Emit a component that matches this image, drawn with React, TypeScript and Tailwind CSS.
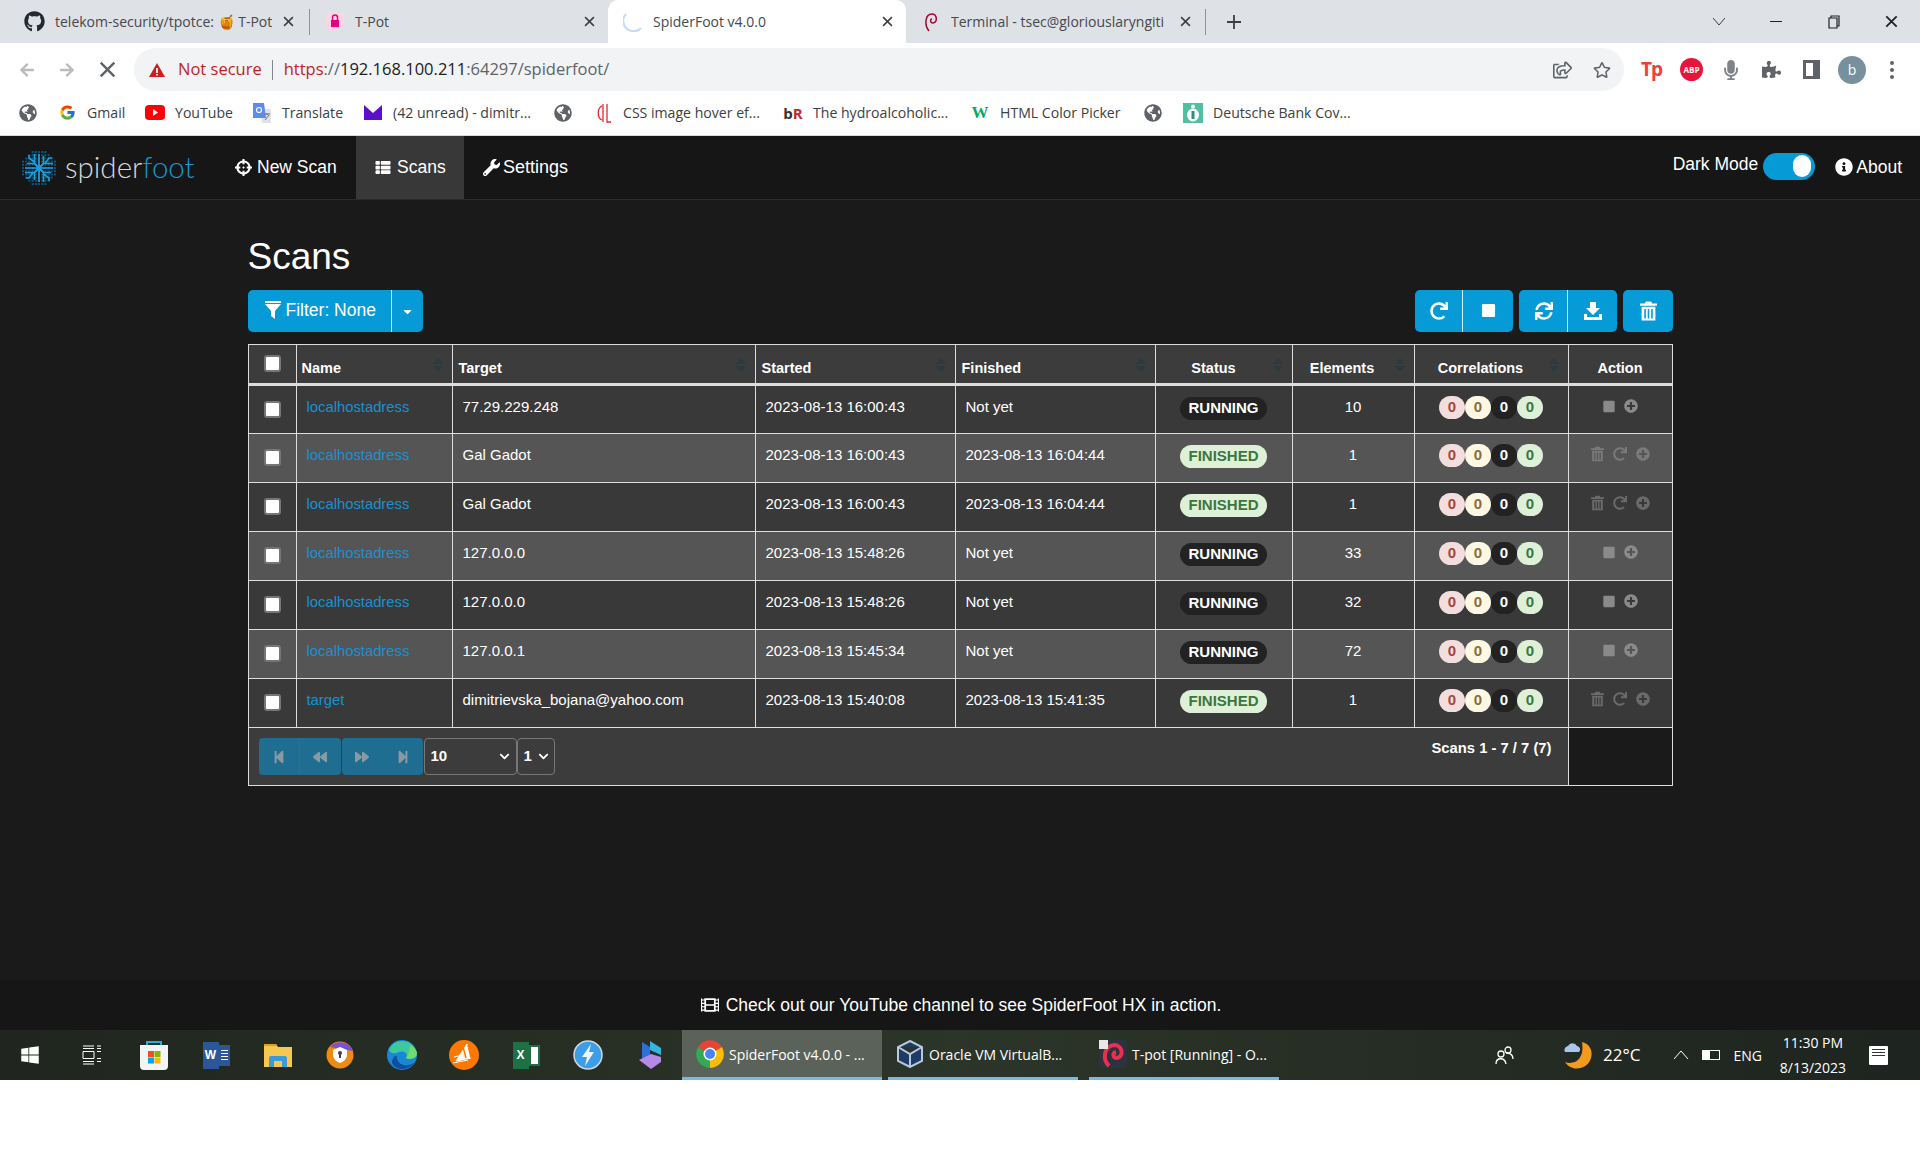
import React from "react";
import { FaGithub, FaWindows, FaWrench, FaInfoCircle, FaFilm, FaPlusCircle, FaStop, FaRedo, FaSync, FaStepBackward, FaStepForward, FaBackward, FaForward, FaCrosshairs, FaThList, FaPuzzlePiece, FaMicrophone, FaGlobeAmericas, FaChevronDown, FaArrowLeft, FaArrowRight, FaRegStar, FaRegShareSquare, FaCaretDown } from "react-icons/fa";
import { FcGoogle } from "react-icons/fc";

const CHROME = { fontFamily: '"Open Sans", "Noto Sans", sans-serif' };
const SANS = { fontFamily: '"Liberation Sans", Arial, sans-serif' };

function X({ className = "" }: { className?: string }) {
  return (
    <svg viewBox="0 0 10 10" className={`w-[11px] h-[11px] ${className}`} fill="none" stroke="currentColor" strokeWidth="1.4">
      <path d="M1 1l8 8M9 1l-8 8" />
    </svg>
  );
}

function Trash({ className = "" }: { className?: string }) {
  return (
    <svg viewBox="0 0 16 18" className={className} fill="currentColor">
      <path d="M5.500 0h5l1 2H16v2H0V2h4.500z" />
      <path fillRule="evenodd" d="M1.500 5h13v13h-13zM4 7v9h1.500V7zM7.250 7v9h1.500V7zM10.500 7v9H12V7z" />
    </svg>
  );
}

function Save({ className = "" }: { className?: string }) {
  return (
    <svg viewBox="0 0 18 18" className={className} fill="currentColor">
      <path d="M6 0h6v6h4l-7 7-7-7h4z" />
      <path d="M0 12h3v3h12v-3h3v6H0z" />
    </svg>
  );
}

function Funnel({ className = "" }: { className?: string }) {
  return (
    <svg viewBox="0 0 16 18" className={className} fill="currentColor">
      <path d="M0 0h16v2H0zM0 3h16l-6 7v8l-4-3v-5z" />
    </svg>
  );
}

function Sort() {
  return (
    <svg viewBox="0 0 10 14" className="absolute w-[10px] h-[14px] top-[13px] right-[9px] text-[#2a3a40]" fill="currentColor">
      <path d="M5 0l5 6H0zM5 14l5-6H0z" />
    </svg>
  );
}

function SpiderLogo() {
  const dots: [number, number][] = [];
  for (let x = -16; x <= 16; x += 3.2) {
    for (let y = -16; y <= 16; y += 3.2) {
      if (x * x + y * y < 300) dots.push([x, y]);
    }
  }
  return (
    <svg viewBox="-18 -18 36 36" className="w-[36px] h-[36px] shrink-0">
      {dots.map(([x, y], i) => (
        <rect key={i} x={x - 1} y={y - 1} width="2" height="2" fill="#07567c" />
      ))}
      <g stroke="#18a0dd" strokeWidth="1.700" fill="none">
        {[0, 90, 180, 270].map((a) => (
          <g key={a} transform={`rotate(${a})`}>
            <path d="M0 0L-4.500 -4.500V-14M0 0L4.500 -4.500V-12M-4.500 -6L-10 -10V-13M0 0V-14" />
          </g>
        ))}
      </g>
    </svg>
  );
}

function Tab({ icon, title, active }: { icon: React.ReactNode; title: React.ReactNode; active?: boolean }) {
  return (
    <div className={`w-[298px] h-[43px] shrink-0 flex items-center pl-[14px] pr-[13px] ${active ? "bg-white rounded-t-[10px]" : ""}`}>
      <div className="w-[22px] h-[22px] shrink-0 flex items-center justify-center">{icon}</div>
      <div className="ml-[9px] mr-[10px] flex-1 overflow-hidden whitespace-nowrap text-[14px] text-[#45484d]">{title}</div>
      <X className="text-[#3c4043] shrink-0" />
    </div>
  );
}

function Bookmark({ icon, label, w }: { icon: React.ReactNode; label?: string; w: string }) {
  return (
    <div className={`flex items-center shrink-0 ${w}`}>
      <div className="w-[20px] h-[20px] flex items-center justify-center shrink-0">{icon}</div>
      {label && <span className="ml-[10px] text-[14.100px] text-[#3c4043] whitespace-nowrap">{label}</span>}
    </div>
  );
}

function TaskApp({ children }: { children: React.ReactNode }) {
  return <div className="w-[62px] h-[50px] shrink-0 flex items-center justify-center">{children}</div>;
}

function Win({ icon, label, w, cls, active }: { icon: React.ReactNode; label: string; w: string; cls: string; active?: boolean }) {
  return (
    <div className={`h-[50px] shrink-0 flex items-center border-b-[3px] border-[#76b9ed] ${w} ${cls} ${active ? "bg-[#5b625a]" : ""}`}>
      <div className="w-[28px] h-[28px] flex items-center justify-center shrink-0">{icon}</div>
      <span className="ml-[5px] mt-[2px] text-[14px] text-white whitespace-nowrap">{label}</span>
    </div>
  );
}

function ChromeLogo({ size = 28 }: { size?: number }) {
  return (
    <svg viewBox="0 0 28 28" width={size} height={size}>
      <path d="M14 14L2 7a14 14 0 0 1 24 0z" fill="#ea4335" />
      <path d="M14 14L26 7a14 14 0 0 1-12 21z" fill="#fbbc05" />
      <path d="M14 14L14 28A14 14 0 0 1 2 7z" fill="#34a853" />
      <circle cx="14" cy="14" r="6.500" fill="#fff" />
      <circle cx="14" cy="14" r="5" fill="#4285f4" />
    </svg>
  );
}

type Row = { name: string; target: string; started: string; finished: string; status: "RUNNING" | "FINISHED"; elements: number };
const rows: Row[] = [
  { name: "localhostadress", target: "77.29.229.248", started: "2023-08-13 16:00:43", finished: "Not yet", status: "RUNNING", elements: 10 },
  { name: "localhostadress", target: "Gal Gadot", started: "2023-08-13 16:00:43", finished: "2023-08-13 16:04:44", status: "FINISHED", elements: 1 },
  { name: "localhostadress", target: "Gal Gadot", started: "2023-08-13 16:00:43", finished: "2023-08-13 16:04:44", status: "FINISHED", elements: 1 },
  { name: "localhostadress", target: "127.0.0.0", started: "2023-08-13 15:48:26", finished: "Not yet", status: "RUNNING", elements: 33 },
  { name: "localhostadress", target: "127.0.0.0", started: "2023-08-13 15:48:26", finished: "Not yet", status: "RUNNING", elements: 32 },
  { name: "localhostadress", target: "127.0.0.1", started: "2023-08-13 15:45:34", finished: "Not yet", status: "RUNNING", elements: 72 },
  { name: "target", target: "dimitrievska_bojana@yahoo.com", started: "2023-08-13 15:40:08", finished: "2023-08-13 15:41:35", status: "FINISHED", elements: 1 },
];

function Check() {
  return <span className="block w-[17px] h-[17px] mx-auto bg-white rounded-[3px] border-2 border-[#767676]" />;
}

function Th({ children, cls = "text-left pl-[6px] pr-[6px]", sort = true }: { children?: React.ReactNode; cls?: string; sort?: boolean }) {
  return (
    <th className={`relative border border-[#ddd] border-b-[3px] align-bottom pb-[5px] text-[14.500px] font-bold text-white leading-[20px] ${cls}`}>
      {children}
      {sort && <Sort />}
    </th>
  );
}

const cell = "border border-[#ddd] align-top pt-[11px] px-[10px] text-[15px] leading-[20px] text-white";
const pillCell = "border border-[#ddd] align-top pt-[10px] px-[10px] text-center";

function Pill({ cls, w, children }: { cls: string; w: string; children: React.ReactNode }) {
  return <span className={`inline-flex items-center justify-center h-[23px] rounded-full font-bold text-[15px] ${w} ${cls}`}>{children}</span>;
}

function Toolbtn({ children, w, first, last }: { children: React.ReactNode; w: string; first?: boolean; last?: boolean }) {
  return (
    <div className={`h-[42px] flex items-center justify-center bg-[#069bd7] text-white pl-[2px] pb-[1px] ${w} ${first ? "rounded-l-[5px]" : ""} ${last ? "rounded-r-[5px]" : "border-r border-[#d9eef7]"}`}>
      {children}
    </div>
  );
}

function PagerBtn({ children, w, cls = "" }: { children: React.ReactNode; w: string; cls?: string }) {
  return <div className={`h-[37px] flex items-center justify-center bg-[#1f6d91] text-[#8a9aa3] ${w} ${cls}`}>{children}</div>;
}

function Globe() {
  return <FaGlobeAmericas className="w-[18px] h-[18px] text-[#5f6368]" />;
}

export default function App() {
  return (
    <div className="w-[1920px] h-[1168px] bg-white overflow-hidden flex flex-col" style={SANS}>
      {/* browser chrome */}
      <div style={CHROME} className="shrink-0">
        <div className="h-[43px] bg-[#dee1e6] flex items-center pl-[12px]">
          <div className="w-[298px] h-[43px] shrink-0 flex items-center pl-[12px] pr-[14px]">
            <FaGithub className="w-[21px] h-[21px] text-[#24292f] shrink-0" />
            <div className="ml-[10px] w-[217px] overflow-hidden whitespace-nowrap text-[14px] text-[#45484d]">telekom-security/tpotce: 🍯 T-Pot</div>
            <X className="ml-[11px] text-[#3c4043] shrink-0" />
          </div>
          <div className="w-px h-[26px] bg-[#8f9296] -ml-px shrink-0" />
          <Tab
            icon={
              <svg viewBox="0 0 20 22" className="w-[20px] h-[22px]">
                <path d="M1 2h18v11q0 5-9 8-9-3-9-8z" fill="#fbd7e6" />
                <rect x="6" y="9" width="8" height="7" fill="#e6007e" />
                <path d="M7.500 9V6.500a2.500 2.500 0 0 1 5 0V9" fill="none" stroke="#e6007e" strokeWidth="1.500" />
              </svg>
            }
            title="T-Pot"
          />
          <Tab
            active
            icon={
              <svg viewBox="0 0 20 20" className="w-[20px] h-[20px]" fill="none" stroke="#c6d9f5" strokeWidth="2">
                <path d="M3 2a9 9 0 0 0 15 14" />
              </svg>
            }
            title="SpiderFoot v4.0.0"
          />
          <Tab
            icon={
              <svg viewBox="0 0 20 22" className="w-[20px] h-[22px]" fill="none" stroke="#a80030" strokeWidth="1.500">
                <path d="M8 20C3 14 4 3 11 3c5 0 6 8 1 9-3 0-3-4-1-4" />
              </svg>
            }
            title="Terminal - tsec@gloriouslaryngiti"
          />
          <div className="w-px h-[26px] bg-[#8f9296] shrink-0 ml-[1px]" />
          <svg viewBox="0 0 14 14" className="w-[14px] h-[14px] ml-[21px] shrink-0" stroke="#3c4043" strokeWidth="1.800">
            <path d="M7 0v14M0 7h14" />
          </svg>
          <svg viewBox="0 0 12 8" className="w-[12px] h-[8px] ml-[472px] shrink-0" fill="none" stroke="#3c4043">
            <path d="M0 0l6 7 6-7" />
          </svg>
          <div className="w-[12px] h-px bg-[#222] ml-[45px] shrink-0" />
          <svg viewBox="0 0 12 14" className="w-[12px] h-[14px] ml-[46px] shrink-0" fill="none" stroke="#222" strokeWidth="1.200">
            <path d="M1 3h8v10H1zM3 3V1h8v10H9" />
          </svg>
          <X className="ml-[45px] w-[13px] h-[13px] text-[#222] shrink-0" />
        </div>
        <div className="h-[48px] bg-white flex items-start pt-[5px] pl-[19px]">
          <div className="flex items-center h-[43px]">
            <FaArrowLeft className="w-[16px] h-[16px] text-[#babcbe] shrink-0" />
            <FaArrowRight className="w-[16px] h-[16px] text-[#babcbe] ml-[24px] shrink-0" />
            <X className="w-[17px] h-[17px] ml-[24px] text-[#5f6368] shrink-0" />
          </div>
          <div className="ml-[18px] w-[1490px] h-[43px] rounded-full bg-[#f1f3f4] flex items-center pl-[15px] pr-[13px] shrink-0">
            <svg viewBox="0 0 16 14" className="w-[16px] h-[14px] shrink-0" fill="#c5221f">
              <path d="M8 0l8 14H0z" />
              <path d="M7.200 5h1.600v5H7.200zM7.200 11h1.600v1.500H7.200z" fill="#fff" />
            </svg>
            <span className="ml-[13px] text-[16.500px] text-[#c5221f] whitespace-nowrap">Not secure</span>
            <div className="w-px h-[20px] bg-[#80868b] ml-[10px]" />
            <span className="ml-[11px] text-[16.500px] whitespace-nowrap text-[#5f6368]">
              <span className="text-[#c5221f]">https</span>://<span className="text-[#202124]">192.168.100.211</span>:64297/spiderfoot/
            </span>
            <FaRegShareSquare className="ml-auto w-[19px] h-[18px] text-[#5f6368]" />
            <FaRegStar className="ml-[21px] w-[18px] h-[18px] text-[#5f6368]" />
          </div>
          <div className="flex items-center h-[43px] ml-[17px]">
            <span className="w-[20px] text-[#f23b3b] font-bold text-[19px] tracking-[-1px] leading-none">Tp</span>
            <span className="ml-[19px] w-[23px] h-[23px] rounded-full bg-[#e8143c] text-white text-[8px] font-bold flex items-center justify-center">ABP</span>
            <FaMicrophone className="ml-[21px] w-[14px] h-[20px] text-[#7f8387]" />
            <FaPuzzlePiece className="ml-[24px] w-[19px] h-[19px] text-[#5f6368]" />
            <div className="ml-[22px] w-[17px] h-[19px] border-[3px] border-r-[7px] border-[#5f6368]" />
            <div className="ml-[18px] w-[28px] h-[28px] rounded-full bg-[#78909c] text-white text-[14px] flex items-center justify-center">b</div>
            <div className="ml-[24px] flex flex-col gap-[3px]">
              <span className="w-[4px] h-[4px] rounded-full bg-[#5f6368]" />
              <span className="w-[4px] h-[4px] rounded-full bg-[#5f6368]" />
              <span className="w-[4px] h-[4px] rounded-full bg-[#5f6368]" />
            </div>
          </div>
        </div>
        <div className="h-[45px] bg-white flex items-center pl-[18px] border-b border-[#dadce0]">
          <Bookmark w="w-[39px]" icon={<Globe />} />
          <Bookmark w="w-[88px]" icon={<FcGoogle className="w-[17px] h-[17px]" />} label="Gmail" />
          <Bookmark
            w="w-[107px]"
            icon={
              <svg viewBox="0 0 20 15" className="w-[20px] h-[15px]">
                <rect width="20" height="15" rx="4" fill="#f00" />
                <path d="M8 4l5 3.500-5 3.500z" fill="#fff" />
              </svg>
            }
            label="YouTube"
          />
          <Bookmark
            w="w-[111px]"
            icon={
              <svg viewBox="0 0 20 20" className="w-[20px] h-[20px]">
                <path d="M8 6h11v14H10z" fill="#dfe3e8" />
                <path d="M1 0h11l2 15H1z" fill="#5b8df0" />
                <circle cx="7" cy="7" r="2.500" fill="none" stroke="#fff" strokeWidth="1.200" />
                <path d="M12 11h6M15 10v2M13 17l4-5" stroke="#70757a" strokeWidth="1" fill="none" />
              </svg>
            }
            label="Translate"
          />
          <Bookmark
            w="w-[190px]"
            icon={
              <svg viewBox="0 0 18 15" className="w-[18px] h-[15px]">
                <rect width="18" height="15" fill="#5c10c9" />
                <path d="M0 0h18L9 8z" fill="#fff" />
              </svg>
            }
            label="(42 unread) - dimitr..."
          />
          <Bookmark w="w-[40px]" icon={<Globe />} />
          <Bookmark
            w="w-[190px]"
            icon={
              <svg viewBox="0 0 18 20" className="w-[18px] h-[20px]" fill="none" stroke="#e3262d" strokeWidth="1.300">
                <path d="M8 3C3 5 3 15 8 17M9 1v18M13 1v18h4" />
              </svg>
            }
            label="CSS image hover ef..."
          />
          <Bookmark
            w="w-[187px]"
            icon={
              <span className="text-[15px] font-bold">
                <span className="text-[#333]">b</span>
                <span className="text-[#c1272d]">R</span>
              </span>
            }
            label="The hydroalcoholic..."
          />
          <Bookmark w="w-[173px]" icon={<span className="text-[#04aa6d] text-[17px] font-bold" style={{ fontFamily: '"Liberation Serif", serif' }}>W</span>} label="HTML Color Picker" />
          <Bookmark w="w-[40px]" icon={<Globe />} />
          <Bookmark
            w="w-[170px]"
            icon={
              <svg viewBox="0 0 20 20" className="w-[20px] h-[20px]">
                <rect width="20" height="20" fill="#4fbf9f" />
                <ellipse cx="10" cy="12" rx="6" ry="6.500" fill="#fff" />
                <path d="M8.500 8h3v8h-3z" fill="#2d8f73" />
                <circle cx="10" cy="3.500" r="2" fill="#fff" />
              </svg>
            }
            label="Deutsche Bank Cov..."
          />
        </div>
      </div>

      {/* SpiderFoot */}
      <div className="bg-[#1a1a1a] h-[894px] shrink-0 flex flex-col">
        <div className="h-[64px] bg-[#161616] border-b border-[#2b2b2b] flex items-stretch shrink-0 text-white">
          <div className="flex items-center pl-[21px] w-[225px]">
            <SpiderLogo />
            <span className="ml-[8px] text-[29.500px] font-light leading-none -mt-[2px]" style={{ fontFamily: "Lato, sans-serif" }}>
              <span className="text-[#d8d8d8]">spider</span>
              <span className="text-[#1497d4]">foot</span>
            </span>
          </div>
          <div className="flex items-center w-[131px] pl-[10px] text-[17.500px]">
            <FaCrosshairs className="w-[17px] h-[17px] mr-[5px]" />
            <span>New Scan</span>
          </div>
          <div className="flex items-center w-[108px] pl-[18px] bg-[#383838] text-[17.500px]">
            <FaThList className="w-[18px] h-[15px] mr-[5px]" />
            <span>Scans</span>
          </div>
          <div className="flex items-center pl-[19px] text-[18px]">
            <FaWrench className="w-[17px] h-[17px] mr-[3px]" />
            <span>Settings</span>
          </div>
          <div className="ml-auto flex items-center pr-[18px]">
            <span className="text-[17.500px] -mt-[7px]">Dark Mode</span>
            <div className="ml-[5px] w-[52px] h-[27px] rounded-full bg-[#069bd7] flex items-center justify-end pr-[4px] -mt-[3px]">
              <div className="w-[18px] h-[22px] rounded-full bg-white" />
            </div>
            <FaInfoCircle className="ml-[20px] w-[18px] h-[18px] -mt-[2px]" />
            <span className="ml-[3px] text-[17.500px]">About</span>
          </div>
        </div>

        <main className="w-[1425px] mx-auto flex-1 pt-[36px]">
          <h1 className="text-[37px] leading-[42px] text-white font-normal">Scans</h1>
          <div className="mt-[12px] flex items-center">
            <div className="flex">
              <div className="h-[42px] w-[144px] pl-[17px] pb-[2px] flex items-center bg-[#069bd7] text-white rounded-l-[5px] border-r border-[#d9eef7] text-[17.500px]">
                <Funnel className="w-[16px] h-[18px] mr-[5px]" />
                Filter: None
              </div>
              <div className="h-[42px] w-[31px] flex items-center justify-center bg-[#069bd7] text-white rounded-r-[5px]">
                <FaCaretDown className="w-[13px] h-[13px]" />
              </div>
            </div>
            <div className="ml-auto flex gap-[6px]">
              <div className="flex">
                <Toolbtn w="w-[48px]" first>
                  <FaRedo className="w-[18px] h-[18px]" />
                </Toolbtn>
                <Toolbtn w="w-[50px]" last>
                  <FaStop className="w-[15px] h-[15px]" />
                </Toolbtn>
              </div>
              <div className="flex">
                <Toolbtn w="w-[49px]" first>
                  <FaSync className="w-[18px] h-[18px]" />
                </Toolbtn>
                <Toolbtn w="w-[49px]" last>
                  <Save className="w-[18px] h-[18px]" />
                </Toolbtn>
              </div>
              <Toolbtn w="w-[50px]" first last>
                <Trash className="w-[17px] h-[20px]" />
              </Toolbtn>
            </div>
          </div>

          <table className="mt-[12px] w-[1424px] table-fixed border-collapse">
            <colgroup>
              <col className="w-[48px]" />
              <col className="w-[156px]" />
              <col className="w-[303px]" />
              <col className="w-[200px]" />
              <col className="w-[200px]" />
              <col className="w-[137px]" />
              <col className="w-[122px]" />
              <col className="w-[154px]" />
              <col className="w-[104px]" />
            </colgroup>
            <thead>
              <tr className="bg-[#3c3c3c] h-[40px]">
                <th className="border border-[#ddd] border-b-[3px] align-top pt-[10px]">
                  <Check />
                </th>
                <Th cls="text-left pl-[5px] pr-[6px]">Name</Th>
                <Th>Target</Th>
                <Th>Started</Th>
                <Th>Finished</Th>
                <Th cls="text-center pl-[5px] pr-[25px]">Status</Th>
                <Th cls="text-center pl-[5px] pr-[27px]">Elements</Th>
                <Th cls="text-center pl-[5px] pr-[26px]">Correlations</Th>
                <Th cls="text-center px-[5px]" sort={false}>Action</Th>
              </tr>
            </thead>
            <tbody>
              {rows.map((r, i) => (
                <tr key={i} className={`h-[49px] ${i % 2 === 0 ? "bg-[#393939]" : "bg-[#555555]"}`}>
                  <td className="border border-[#ddd] align-middle pb-[1px]">
                    <Check />
                  </td>
                  <td className={cell}>
                    <span className="text-[#1a90d4] text-[14.800px]">{r.name}</span>
                  </td>
                  <td className={cell}>{r.target}</td>
                  <td className={cell}>{r.started}</td>
                  <td className={cell}>{r.finished}</td>
                  <td className={pillCell}>
                    {r.status === "RUNNING" ? (
                      <Pill w="w-[87px]" cls="bg-[#222222] text-white">RUNNING</Pill>
                    ) : (
                      <Pill w="w-[87px]" cls="bg-[#dff0d8] text-[#3c763d]">FINISHED</Pill>
                    )}
                  </td>
                  <td className={`${cell} text-center`}>{r.elements}</td>
                  <td className={pillCell}>
                    <div className="flex justify-center">
                      <Pill w="w-[26px]" cls="bg-[#f2dede] text-[#a94442]">0</Pill>
                      <Pill w="w-[26px]" cls="bg-[#fcf8e3] text-[#8a6d3b]">0</Pill>
                      <Pill w="w-[26px]" cls="bg-[#222222] text-white">0</Pill>
                      <Pill w="w-[26px]" cls="bg-[#dff0d8] text-[#3c763d]">0</Pill>
                    </div>
                  </td>
                  <td className="border border-[#ddd] align-top pt-[11px] px-0">
                    {r.status === "RUNNING" ? (
                      <div className="flex justify-center items-center gap-[9px] h-[18px] text-[#8a8a8a]">
                        <FaStop className="w-[12px] h-[13px]" />
                        <FaPlusCircle className="w-[14px] h-[14px]" />
                      </div>
                    ) : (
                      <div className={`flex justify-center items-center gap-[9px] h-[18px] ${i % 2 === 0 ? "text-[#6a6a6a]" : "text-[#7a7a7a]"}`}>
                        <Trash className="w-[13px] h-[16px]" />
                        <FaRedo className="w-[14px] h-[14px]" />
                        <FaPlusCircle className="w-[14px] h-[14px]" />
                      </div>
                    )}
                  </td>
                </tr>
              ))}
              <tr className="h-[58px]">
                <td colSpan={8} className="border border-[#ddd] bg-[#3c3c3c] align-top pt-[10px] pl-[10px] pr-[16px]">
                  <div className="flex items-start">
                    <div className="flex">
                      <PagerBtn w="w-[41px]" cls="rounded-l-[4px] border-r border-[#0f7ba8]">
                        <FaStepBackward className="w-[14px] h-[14px]" />
                      </PagerBtn>
                      <PagerBtn w="w-[41px]" cls="rounded-r-[4px]">
                        <FaBackward className="w-[16px] h-[14px]" />
                      </PagerBtn>
                      <PagerBtn w="w-[41px]" cls="ml-px rounded-l-[4px]">
                        <FaForward className="w-[16px] h-[14px]" />
                      </PagerBtn>
                      <PagerBtn w="w-[40px]" cls="rounded-r-[4px]">
                        <FaStepForward className="w-[14px] h-[14px]" />
                      </PagerBtn>
                    </div>
                    <div className="ml-px w-[93px] h-[37px] rounded-[4px] border border-[#777] flex items-center pl-[6px] pr-[6px] text-white font-bold text-[15px]">
                      <span>10</span>
                      <FaChevronDown className="ml-auto w-[11px] h-[11px]" />
                    </div>
                    <div className="w-[38px] h-[37px] rounded-[4px] border border-[#777] flex items-center pl-[6px] pr-[5px] text-white font-bold text-[15px]">
                      <span>1</span>
                      <FaChevronDown className="ml-auto w-[11px] h-[11px]" />
                    </div>
                    <span className="ml-auto text-white font-bold text-[14.800px] leading-[20px]">Scans 1 - 7 / 7 (7)</span>
                  </div>
                </td>
                <td className="border border-[#ddd] bg-[#1a1a1a]" />
              </tr>
            </tbody>
          </table>
        </main>

        <div className="h-[50px] bg-[#161616] shrink-0 flex items-center justify-center text-white text-[17.500px] pl-[1px]">
          <FaFilm className="w-[20px] h-[18px] mr-[6px]" />
          <span>Check out our YouTube channel to see SpiderFoot HX in action.</span>
        </div>
      </div>

      {/* taskbar */}
      <div style={CHROME} className="h-[50px] shrink-0 bg-gradient-to-r from-[#20261f] via-[#2c3529] to-[#1e241f] flex items-center text-white">
        <div className="w-[62px] pr-[3px] flex items-center justify-center">
          <FaWindows className="w-[20px] h-[20px]" />
        </div>
        <TaskApp>
          <svg viewBox="0 0 20 20" className="w-[20px] h-[20px] -ml-[3px]" fill="none" stroke="white" strokeWidth="1">
            <path d="M1 1h11M1 3.500h11M1 16.500h11M1 19h11M1 6.500h11v7H1zM15 1h4M15 3.500h4M15 6.500h4M15 13.500h4M15 16.500h4" />
          </svg>
        </TaskApp>
        <TaskApp>
          <svg viewBox="0 0 30 30" className="w-[30px] h-[30px] -ml-[2px]">
            <path d="M8 6V2h14v4" fill="none" stroke="#29abe2" strokeWidth="2" />
            <path d="M1 5h28v21a4 4 0 0 1-4 4H5a4 4 0 0 1-4-4z" fill="#f4f4f4" />
            <rect x="9" y="11" width="6" height="6" fill="#f25022" />
            <rect x="15.500" y="11" width="6" height="6" fill="#7fba00" />
            <rect x="9" y="17.500" width="6" height="6" fill="#00a4ef" />
            <rect x="15.500" y="17.500" width="6" height="6" fill="#ffb900" />
          </svg>
        </TaskApp>
        <TaskApp>
          <div className="w-[27px] h-[27px] flex items-center -ml-[2px]">
            <div className="w-[16px] h-[27px] bg-[#2b579a] text-white text-[12px] font-bold flex items-center justify-center" style={SANS}>W</div>
            <div className="w-[11px] h-[21px] bg-[#2b579a] p-[2px] flex flex-col gap-[2px] justify-center">
              <span className="h-px bg-white" />
              <span className="h-px bg-white" />
              <span className="h-px bg-white" />
              <span className="h-px bg-white" />
            </div>
          </div>
        </TaskApp>
        <TaskApp>
          <svg viewBox="0 0 28 24" className="w-[28px] h-[24px] -ml-[2px]">
            <path d="M0 1h12l2 3h14v20H0z" fill="#f6c850" />
            <path d="M0 1h12l1 2H0z" fill="#d9a21c" />
            <path d="M5 24v-9a2 2 0 0 1 2-2h14a2 2 0 0 1 2 2v9h-5v-6h-8v6z" fill="#3c9ad8" />
          </svg>
        </TaskApp>
        <TaskApp>
          <svg viewBox="0 0 28 28" className="w-[28px] h-[28px] -ml-[2px]">
            <circle cx="14" cy="14" r="13.500" fill="#f08a10" />
            <path d="M4 6a13.500 13.500 0 0 1 23 4z" fill="#7b4fd8" />
            <path d="M14 6l7 3v5q0 5-7 8-7-3-7-8V9z" fill="#fff" />
            <circle cx="14" cy="12" r="2" fill="#444" />
            <rect x="13" y="13" width="2" height="4" fill="#444" />
          </svg>
        </TaskApp>
        <TaskApp>
          <svg viewBox="0 0 30 30" className="w-[30px] h-[30px] -ml-[2px]">
            <circle cx="15" cy="15" r="15" fill="#1a87d6" />
            <path d="M2 10C6-2 26-3 30 13c0 6-8 7-11 5 3-4-2-8-7-6-5 2-8 2-10-2z" fill="#3cc9a0" />
            <path d="M30 13c0 6-8 7-11 5 3-4 4-9 4-13 4 2 6 5 7 8z" fill="#6fdd6a" />
            <path d="M10 17c0 7 8 11 17 6-6 8-18 8-22 0 0-6 5-9 5-6z" fill="#0c4f9c" />
          </svg>
        </TaskApp>
        <TaskApp>
          <svg viewBox="0 0 30 30" className="w-[30px] h-[30px] -ml-[2px]">
            <circle cx="15" cy="15" r="15" fill="#ff7800" />
            <path d="M18 4l4 14-15 3zM5 17l12-3M4 23l15-3" fill="#fff" stroke="#fff" strokeWidth="1" />
            <path d="M14 7l3 11M19 5l3 13" stroke="#ff7800" strokeWidth="1.500" />
          </svg>
        </TaskApp>
        <TaskApp>
          <div className="w-[27px] h-[27px] flex items-center -ml-[2px]">
            <div className="w-[16px] h-[27px] bg-[#1e7145] text-white text-[12px] font-bold flex items-center justify-center" style={SANS}>X</div>
            <div className="w-[11px] h-[21px] bg-[#1e7145] p-[2px]">
              <div className="w-full h-full bg-white" />
            </div>
          </div>
        </TaskApp>
        <TaskApp>
          <svg viewBox="0 0 30 30" className="w-[30px] h-[30px] -ml-[2px]">
            <circle cx="15" cy="15" r="14" fill="#3a9fe8" stroke="#cfd6dc" strokeWidth="1.500" />
            <path d="M18 4l-9 13h5l-2 9 9-14h-5z" fill="#f2f6fa" />
          </svg>
        </TaskApp>
        <TaskApp>
          <svg viewBox="0 0 26 30" className="w-[26px] h-[30px] -ml-[3px]">
            <path d="M5 2l8 5v8l-8 5z" fill="#2f6fd8" />
            <path d="M13 1l11 7v7l-11-5z" fill="#35b6e0" />
            <path d="M2 20l12-6 10 3v5l-10 7z" fill="#b58ae6" />
          </svg>
        </TaskApp>
        <Win w="w-[200px]" cls="pl-[14px]" active icon={<ChromeLogo />} label="SpiderFoot v4.0.0 - ..." />
        <Win
          w="w-[190px]"
          cls="ml-[6px] pl-[8px]"
          icon={
            <svg viewBox="0 0 26 28" className="w-[26px] h-[28px]" fill="#1f3a63" stroke="#b5c9e2" strokeWidth="2">
              <path d="M13 1l12 6v14l-12 6-12-6V7zM1 7l12 7 12-7M13 14v13" />
            </svg>
          }
          label="Oracle VM VirtualB..."
        />
        <Win
          w="w-[190px]"
          cls="ml-[11px] pl-[10px]"
          icon={
            <svg viewBox="0 0 28 28" className="w-[28px] h-[28px]">
              <rect width="28" height="28" rx="2" fill="#2c3340" />
              <path d="M10 26C3 19 5 6 15 5c9 0 10 12 3 13-4 0-5-5-1-6" fill="none" stroke="#e8304f" strokeWidth="4" />
              <rect x="0" y="0" width="9" height="9" fill="#e8e8e8" />
            </svg>
          }
          label="T-pot [Running] - O..."
        />
        <svg viewBox="0 0 20 20" className="w-[20px] h-[20px] ml-[216px] shrink-0" fill="none" stroke="white" strokeWidth="1.300">
          <circle cx="13" cy="5" r="3" />
          <circle cx="6" cy="9" r="3" />
          <path d="M1 19c0-7 9-7 10 0M11 8c4 0 7 2 7 6" />
        </svg>
        <svg viewBox="0 0 30 30" className="w-[30px] h-[30px] ml-[48px] shrink-0">
          <path d="M19 2c8 2 11 9 9 16-2 8-11 12-18 10-4-1-6-3-8-6 8 3 20-1 17-20z" fill="#f39a1f" />
          <path d="M2 12a4 4 0 0 1 3-6 5 5 0 0 1 9 0 3.500 3.500 0 0 1 2 6z" fill="#a9c7ea" />
        </svg>
        <span className="ml-[10px] text-[17px] whitespace-nowrap">22°C</span>
        <svg viewBox="0 0 16 10" className="w-[16px] h-[10px] ml-[33px] shrink-0" fill="none" stroke="white">
          <path d="M1 9l7-8 7 8" />
        </svg>
        <div className="ml-[13px] w-[18px] h-[10px] border border-white shrink-0 flex">
          <div className="w-[7px] bg-white" />
        </div>
        <span className="ml-[13px] text-[14px] whitespace-nowrap">ENG</span>
        <div className="ml-[15px] w-[72px] flex flex-col items-center text-[14px] leading-[25px] shrink-0">
          <span>11:30 PM</span>
          <span>8/13/2023</span>
        </div>
        <div className="ml-[20px] w-[19px] h-[19px] bg-white rounded-[1px] shrink-0 flex flex-col gap-[2px] p-[3px]">
          <span className="h-px bg-[#333]" />
          <span className="h-px bg-[#333]" />
          <span className="h-px bg-[#333]" />
        </div>
      </div>
      <div className="flex-1 bg-white" />
    </div>
  );
}
